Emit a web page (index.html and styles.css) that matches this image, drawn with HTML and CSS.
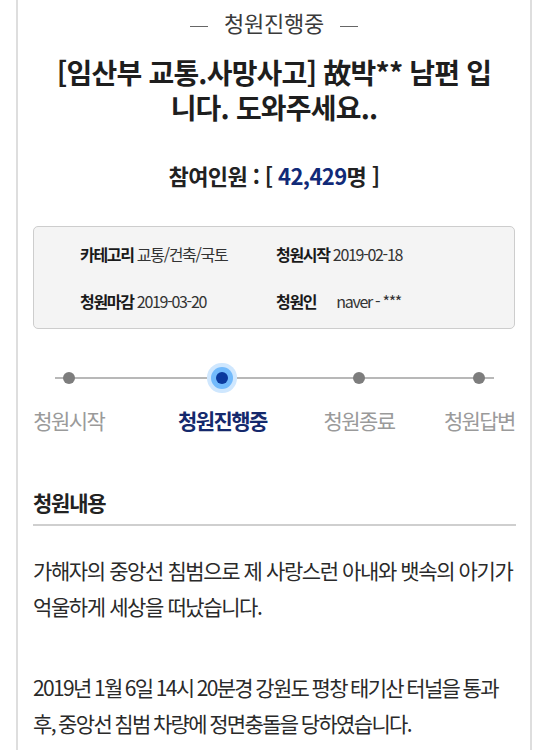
FILE: index.html
```html
<!DOCTYPE html>
<html lang="ko">
<head>
<meta charset="utf-8">
<title>청원진행중</title>
<link rel="stylesheet" href="styles.css">
</head>
<body>
<div class="panel">
  <div class="status"><span class="dash"></span>청원진행중<span class="dash"></span></div>
  <h1 class="title">[임산부 교통.사망사고] 故박** 남편 입니다. 도와주세요..</h1>
  <div class="count">참여인원 : [ <span class="num">42,429</span>명 ]</div>
  <div class="info">
    <div class="cell"><b>카테고리</b> 교통/건축/국토</div>
    <div class="cell"><b>청원시작</b> 2019-02-18</div>
    <div class="cell"><b>청원마감</b> 2019-03-20</div>
    <div class="cell"><b>청원인</b><span class="gap"></span>naver - ***</div>
  </div>
  <div class="steps">
    <div class="step s1"><span class="dot"></span><span class="label">청원시작</span></div>
    <div class="step s2 active"><span class="dot"></span><span class="label">청원진행중</span></div>
    <div class="step s3"><span class="dot"></span><span class="label">청원종료</span></div>
    <div class="step s4"><span class="dot"></span><span class="label">청원답변</span></div>
  </div>
  <h2 class="section">청원내용</h2>
  <div class="content">
    <p>가해자의 중앙선 침범으로 제 사랑스런 아내와 뱃속의 아기가 억울하게 세상을 떠났습니다.</p>
    <p class="dated">2019년 1월 6일 14시 20분경 강원도 평창 태기산 터널을 통과 후, 중앙선 침범 차량에 정면충돌을 당하였습니다.</p>
  </div>
</div>
</body>
</html>
```
FILE: styles.css
```css
html, body {
  margin: 0;
  padding: 0;
  background: #fff;
}
body {
  font-family: "Noto Sans CJK KR", "Noto Sans", sans-serif;
  color: #222;
  overflow: hidden;
}
.panel {
  box-sizing: border-box;
  margin-left: 16px;
  width: 516px;
  min-height: 750px;
  border-left: 2px solid #dedede;
  border-right: 2px solid #dedede;
  padding: 0 15px;
}
.status {
  padding-top: 8px;
  line-height: 28px;
  font-size: 22px;
  color: #3a3a3a;
  text-align: center;
  letter-spacing: -0.2px;
}
.dash {
  display: inline-block;
  width: 18px;
  height: 1px;
  background: #666;
  vertical-align: middle;
  margin: 0 16px;
}
.title {
  margin: 19px 20px 0;
  font-size: 28px;
  line-height: 35px;
  font-weight: 700;
  text-align: center;
  letter-spacing: -0.8px;
  color: #1e1e1e;
}
.count {
  margin-top: 35px;
  font-size: 22px;
  line-height: 30px;
  font-weight: 700;
  text-align: center;
  letter-spacing: -0.6px;
}
.count .num {
  color: #112a78;
}
.info {
  margin-top: 36px;
  box-sizing: border-box;
  height: 103px;
  background: #f4f4f4;
  border: 1px solid #cdcdcd;
  border-radius: 5px;
  padding: 15px 0 0 46px;
  display: grid;
  grid-template-columns: 196px auto;
  row-gap: 23px;
  align-content: start;
  font-size: 16px;
  line-height: 24px;
  letter-spacing: -1.3px;
  color: #333;
}
.info b {
  color: #1a1a1a;
  font-weight: 700;
}
.info .gap {
  display: inline-block;
  width: 20px;
}
.steps {
  position: relative;
  display: flex;
  margin-top: 36px;
}
.steps::before {
  content: "";
  position: absolute;
  left: 22px;
  width: 439px;
  top: 12px;
  height: 2px;
  background: #b8b8b8;
}
.step {
  width: 72px;
  display: flex;
  flex-direction: column;
  align-items: center;
  position: relative;
}
.s2 { margin-left: 82px; }
.s3 { margin-left: 65px; }
.s4 { margin-left: 49px; }
.dot {
  width: 12px;
  height: 12px;
  margin: 7px 0;
  border-radius: 50%;
  background: #7d7d7d;
}
.active .dot {
  background: #0a399e;
  box-shadow: 0 0 0 5px #72bafc, 0 0 0 9px #cfe7fe;
}
.label {
  margin-top: 15px;
  white-space: nowrap;
  font-size: 21px;
  line-height: 28px;
  letter-spacing: -1.6px;
  color: #9a9a9a;
}
.active .label {
  color: #15296c;
  font-weight: 700;
}
.section {
  margin: 53px 0 0;
  font-size: 21px;
  line-height: 30px;
  font-weight: 700;
  letter-spacing: -1.2px;
  padding-bottom: 7px;
  border-bottom: 2px solid #cfcfcf;
  margin-right: -1px;
}
.content {
  padding-top: 26px;
  font-size: 21px;
  line-height: 36px;
  letter-spacing: -1.4px;
  color: #2a2a2a;
}
.content p {
  margin: 0 0 45px;
}
.content .dated {
  letter-spacing: -1.65px;
  word-spacing: -1px;
}
```
